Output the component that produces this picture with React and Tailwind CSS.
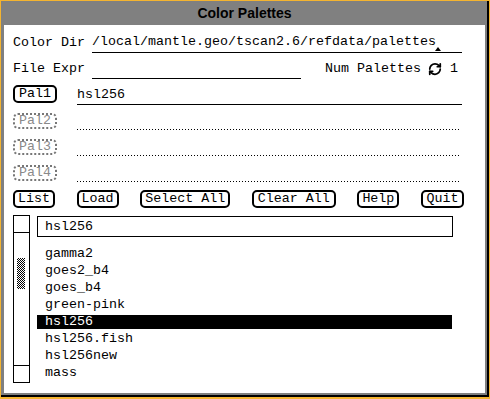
import { RefreshCw } from "lucide-react";

const mono = { fontFamily: '"Liberation Mono", "DejaVu Sans Mono", monospace' };

const items = [
  "gamma2",
  "goes2_b4",
  "goes_b4",
  "green-pink",
  "hsl256",
  "hsl256.fish",
  "hsl256new",
  "mass",
];

function Btn({ label, w }) {
  return (
    <div
      className={`${w} h-[18px] border-2 border-black rounded-[5px] flex items-center justify-center leading-[14px]`}
    >
      {label}
    </div>
  );
}

function PalRow({ label, value, active }) {
  return (
    <div className="flex items-start h-[26px]">
      {active ? (
        <div className="mt-[6px] w-[44px] h-[18px] border-2 border-black rounded-[5px] flex items-center justify-center leading-[14px]">
          {label}
        </div>
      ) : (
        <div className="mt-[8px] w-[44px] h-[16px] border-2 border-dotted border-[#777] rounded-[5px] flex items-center justify-center leading-[12px] text-[#8a8a8a]">
          {label}
        </div>
      )}
      <div className="ml-[20px] w-[385px] h-full flex items-end">
        {active ? (
          <div className="w-full h-full flex items-end border-b border-black pb-px leading-[16px]">
            {value}
          </div>
        ) : (
          <div className="w-[382px] h-px mb-px bg-[repeating-linear-gradient(to_right,#000_0_1px,transparent_1px_3px)]" />
        )}
      </div>
    </div>
  );
}

export default function App() {
  return (
    <div className="w-[490px] h-[399px] bg-[#f4b430] pt-px pl-px pr-px pb-[2px]">
      <div className="h-full flex flex-col bg-[#808080] border-r-2 border-b-2 border-black pl-[3px] pr-[2px] pb-[2px]">
        {/* TITLE */}
        <div
          className="h-[24px] flex items-center justify-center text-[14px] font-bold text-black"
          style={{ fontFamily: '"Liberation Sans", Arial, sans-serif' }}
        >
          Color Palettes
        </div>

        {/* BODY */}
        <div className="flex-1 bg-white text-black text-[13.33px] pl-[9px] flex flex-col" style={mono}>
          {/* Color Dir */}
          <div className="flex h-[28px]">
            <div className="w-[79px] flex items-end pb-[2px] leading-[16px]">Color Dir</div>
            <div className="relative w-[370px] flex items-end border-b border-black pb-[2px] leading-[16px]">
              /local/mantle.geo/tscan2.6/refdata/palettes
              <div className="absolute left-[343px] bottom-px w-0 h-0 border-l-[3px] border-r-[3px] border-b-[4px] border-l-transparent border-r-transparent border-b-black" />
            </div>
          </div>

          {/* File Expr */}
          <div className="flex h-[26px]">
            <div className="w-[79px] flex items-end pb-[2px] leading-[16px]">File Expr</div>
            <div className="w-[209px] border-b border-black" />
            <div className="ml-[24px] flex items-end pb-[2px] leading-[16px]">
              <span>Num Palettes</span>
              <RefreshCw className="ml-[7px] mb-px" size={14} strokeWidth={3} />
              <span className="ml-[8px]">1</span>
            </div>
          </div>

          {/* Palettes */}
          <PalRow label="Pal1" value="hsl256" active />
          <PalRow label="Pal2" />
          <PalRow label="Pal3" />
          <PalRow label="Pal4" />

          {/* Buttons */}
          <div className="mt-[7px] w-[451px] flex justify-between">
            <Btn label="List" w="w-[42px]" />
            <Btn label="Load" w="w-[42px]" />
            <Btn label="Select All" w="w-[90px]" />
            <Btn label="Clear All" w="w-[84px]" />
            <Btn label="Help" w="w-[42px]" />
            <Btn label="Quit" w="w-[43px]" />
          </div>

          {/* List area */}
          <div className="mt-[7px] flex">
            <div className="w-[17px] h-[168px] border border-black flex flex-col">
              <div className="h-[17px] border-b border-black" />
              <div className="flex-1 pt-[25px] pl-[3px]">
                <div className="w-[8px] h-[31px] bg-[repeating-conic-gradient(#000_0_25%,#fff_0_50%)] bg-[length:2px_2px]" />
              </div>
              <div className="h-[17px] border-t border-black" />
            </div>
            <div className="ml-[7px] w-[416px] flex flex-col">
              <div className="mt-px h-[21px] border border-black pl-[7px] flex items-center leading-[16px]">
                hsl256
              </div>
              <div className="mt-[8px] flex flex-col">
                {items.map((it, i) => (
                  <div key={it} className="h-[17px] flex items-center">
                    <div
                      className={`w-[415px] h-[14px] pl-[8px] leading-[14px] ${
                        i === 4 ? "bg-black text-white" : ""
                      }`}
                    >
                      {it}
                    </div>
                  </div>
                ))}
              </div>
            </div>
          </div>
        </div>
      </div>
    </div>
  );
}
